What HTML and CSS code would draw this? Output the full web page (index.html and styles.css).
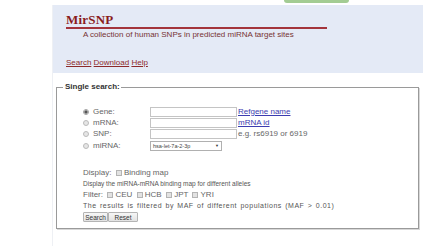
FILE: index.html
```html
<!DOCTYPE html>
<html>
<head>
<meta charset="utf-8">
<link rel="stylesheet" href="styles.css">
</head>
<body>
<div class="top"><div class="green"></div></div>
<div class="page">
  <div class="header">
    <h1>MirSNP</h1>
    <p class="subtitle">A collection of human SNPs in predicted miRNA target sites</p>
    <div class="nav"><a href="#">Search</a> <a href="#">Download</a> <a href="#">Help</a></div>
  </div>
  <div class="content">
    <fieldset class="box">
      <legend>Single search:</legend>
      <div class="inner">
        <table class="form">
          <tr>
            <td class="lab"><label><input type="radio" name="t" class="rd" checked>Gene:</label></td>
            <td><input type="text" class="tx"></td>
            <td><a href="#" class="bl">Refgene name</a></td>
          </tr>
          <tr>
            <td class="lab"><label><input type="radio" name="t" class="rd">mRNA:</label></td>
            <td><input type="text" class="tx"></td>
            <td><a href="#" class="bl">mRNA id</a></td>
          </tr>
          <tr>
            <td class="lab"><label><input type="radio" name="t" class="rd">SNP:</label></td>
            <td><input type="text" class="tx"></td>
            <td class="hint">e.g. rs6919 or 6919</td>
          </tr>
          <tr class="selrow">
            <td class="lab"><label><input type="radio" name="t" class="rd">miRNA:</label></td>
            <td><div class="sel"><span>hsa-let-7a-2-3p</span><span class="arr">&#9660;</span></div></td>
            <td></td>
          </tr>
        </table>
        <div class="opt first">Display: <input type="checkbox" class="cb"> Binding map</div>
        <div class="small">Display the miRNA-mRNA binding map for different alleles</div>
        <div class="opt">Filter: <input type="checkbox" class="cb"> CEU <input type="checkbox" class="cb"> HCB <input type="checkbox" class="cb"> JPT <input type="checkbox" class="cb"> YRI</div>
        <div class="small wide">The results is filtered by MAF of different populations (MAF &gt; 0.01)</div>
        <div class="btns"><button class="bt b1">Search</button><button class="bt b2">Reset</button></div>
      </div>
    </fieldset>
  </div>
</div>
</body>
</html>
```
FILE: styles.css
```css
html, body { margin: 0; padding: 0; background: #fff; }
body { font-family: "Liberation Sans", Arial, sans-serif; color: #666; overflow: hidden; }
.top { height: 5px; padding-left: 284px; }
.green { width: 65px; height: 3px; background: #a3cc93; border-radius: 0 0 3px 3px; }
.page { margin-left: 52px; border-left: 1px solid #eef0f4; min-height: 241px; }
.header { background: #e4eaf6; height: 68px; box-sizing: border-box; padding: 9px 0 0 13px; }
h1 { margin: 0; width: 261px; font: bold 13px/12px "Liberation Serif", "Times New Roman", serif; color: #8a1c1c; letter-spacing: 0.2px; border-bottom: 2px solid #a3343c; padding-bottom: 1px; }
.subtitle { margin: 1px 0 0 17px; font-size: 8px; line-height: 10px; color: #733; }
.nav { margin-top: 18px; font-size: 8px; line-height: 10px; }
.nav a { color: #8d2a2a; }
.content { padding: 9px 0 0 3px; }
.box { margin: 0; width: 363px; box-sizing: border-box; padding: 0; border: 1px solid #9a9a9a; box-shadow: 1px 1px 0 #d8d8d8; height: 147px; }
legend { margin-left: 6px; padding: 0 1px 0 2px; font-weight: bold; font-size: 8px; line-height: 10px; color: #333; }
.inner { padding: 14px 0 0 26px; }
.form { border-collapse: collapse; font-size: 8px; }
.form td { padding: 0; height: 11px; vertical-align: middle; line-height: 10px; }
.form .selrow td { height: 12px; vertical-align: bottom; }
.lab { width: 67px; }
.lab label { display: flex; align-items: center; }
.rd { appearance: none; -webkit-appearance: none; width: 6px; height: 6px; margin: 0 4px 0 0; border: 1px solid #bbb; border-radius: 50%; background: #e6e6e6; box-sizing: border-box; }
.rd:checked { background: radial-gradient(circle, #555 0 1.4px, #ddd 1.8px); border-color: #aaa; }
.tx { display: block; width: 87px; height: 10px; margin: 0; border: 1px solid #c4c4c4; box-sizing: border-box; padding: 0; }
.bl { color: #3c3cb0; margin-left: 1px; }
.hint { padding-left: 1px !important; color: #666; }
.sel { display: flex; align-items: center; justify-content: space-between; width: 72px; height: 10px; box-sizing: border-box; border: 1px solid #b0b0b0; font-size: 5.5px; color: #444; padding: 0 2px; }
.arr { font-size: 4px; color: #333; }
.opt { font-size: 8px; line-height: 11px; display: flex; align-items: center; white-space: pre; }
.opt.first { margin-top: 16px; }
.cb { appearance: none; -webkit-appearance: none; width: 6px; height: 6px; margin: 0 0 0 2px; border: 1px solid #b4b4b4; background: #e2e2e2; box-sizing: border-box; }
.small { font-size: 6.5px; line-height: 11px; color: #555; }
.small.wide { font-size: 7px; letter-spacing: 0.5px; word-spacing: 1px; }
.btns { display: flex; margin-top: 1px; }
.bt { height: 10px; box-sizing: border-box; padding: 0; border: 1px solid #b4b4b4; background: linear-gradient(#f6f6f6, #e2e2e2); font: 6.5px "Liberation Sans", Arial, sans-serif; color: #333; border-radius: 1px; }
.b1 { width: 25px; }
.b2 { width: 30px; }
```
